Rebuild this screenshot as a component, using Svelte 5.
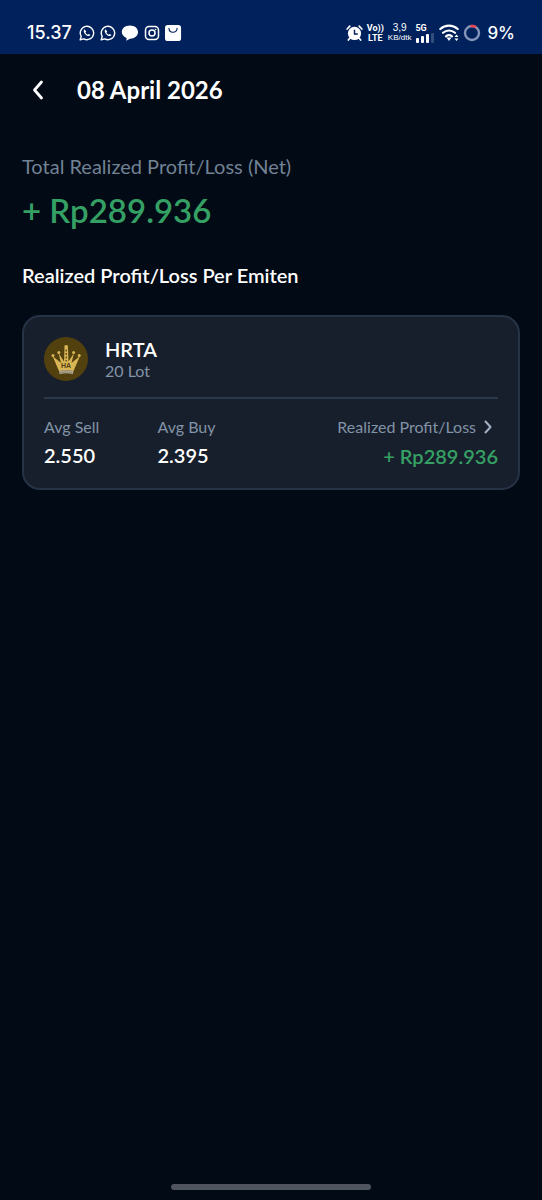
<script>
	let date = "08 April 2026";
	let total = "+ Rp289.936";

	let items = [
		{ code: "HRTA", lot: "20 Lot", sell: "2.550", buy: "2.395", profit: "+ Rp289.936" }
	];
</script>

<div class="screen">
	<div class="status">
		<div class="status-left">
			<span class="clock">15.37</span>
			{#each [1, 2] as n (n)}
				<svg width="16" height="16" viewBox="0 0 16 16" fill="none" stroke="#fff">
					<path d="M1.2 14.8l1-3.4a6.7 6.7 0 1 1 2.6 2.5z" stroke-width="1.4" stroke-linejoin="round" />
					<path d="M5.5 4.2c-1.6 1.5-.6 3.6 1 5.2 1.7 1.6 3.7 2.5 5 .7l-1.8-1.2-1 .8C7.6 9.2 6.8 8.4 6.4 7.4l.8-.9z" fill="#fff" stroke="none" />
				</svg>
			{/each}
			<svg width="18" height="16" viewBox="0 0 18 16" fill="#fff">
				<path d="M9 .5c4.6 0 8 2.8 8 6.600s-3.400 6.700-8 6.700l-3.800 2 .5-2.700C2.800 12 .8 9.800.8 7.100.8 3.300 4.400.5 9 .5z" />
			</svg>
			<svg width="16" height="16" viewBox="0 0 16 16" fill="none" stroke="#fff" stroke-width="1.5">
				<rect x="1.5" y="1.5" width="13" height="13" rx="3.5" />
				<circle cx="8" cy="8" r="3" />
				<circle cx="11.6" cy="4.4" r=".5" fill="#fff" stroke-width=".6" />
			</svg>
			<svg width="17" height="17" viewBox="0 0 18 18">
				<rect x="0" y="0" width="17" height="17" rx="3" fill="#fff" />
				<path d="M4.200 3.500c0 5.600 8.600 5.600 8.600 0" fill="none" stroke="#00215c" stroke-width="1.200" stroke-linecap="round" />
			</svg>
		</div>
		<div class="status-right">
			<svg width="17" height="18" viewBox="0 0 18 18">
				<circle cx="9" cy="9.5" r="7" fill="#fff" />
				<path d="M1.2 4.8l2.8-3M16.8 4.8l-2.8-3M4 14.5l-1.5 2M14 14.5l1.500 2" stroke="#fff" stroke-width="1.8" stroke-linecap="round" />
				<path d="M9 5.5v4.500h3.500" fill="none" stroke="#00215c" stroke-width="1.5" />
			</svg>
			<span class="stack volte"><b>Vo))</b><b>LTE</b></span>
			<span class="stack speed"><span class="rate">3,9</span><span>KB/dtk</span></span>
			<span class="stack signal">
				<b>5G</b>
				<svg width="19" height="10" viewBox="0 0 19 10" fill="#fff">
					<rect x="1" y="5" width="3" height="5" rx="1" />
					<rect x="6" y="3" width="3" height="7" rx="1" />
					<rect x="11" y="1" width="3" height="9" rx="1" />
					<rect x="16" y="0" width="3" height="10" rx="1" opacity=".2" />
				</svg>
			</span>
			<svg width="20" height="18" viewBox="0 0 20 18" fill="none" stroke="#fff" stroke-width="2.2" stroke-linecap="round">
				<path d="M1.3 5c5-4.400 12.400-4.400 17.400 0M4 8.800c3.500-3.100 8.500-3.100 12 0M7 12.300c1.800-1.400 4.200-1.400 6 0" />
				<path d="M7.5 13.500h5L10 17z" fill="#fff" stroke="none" />
				<path d="M15.5 13l2-2.500 2 2.500zM15.500 14.500l2 2.500 2-2.500z" fill="#fff" stroke="none" />
			</svg>
			<svg width="18" height="18" viewBox="0 0 18 18" fill="none" stroke-width="2.4">
				<circle cx="9" cy="9" r="7" stroke="#8394b8" />
				<path d="M7.5 2.2a7 7 0 0 1 5.5 1" stroke="#f04452" />
			</svg>
			<span class="percent">9%</span>
		</div>
	</div>

	<header>
		<button class="back" aria-label="Kembali">
			<svg width="12" height="20" viewBox="0 0 12 20" fill="none" stroke="#fff" stroke-width="2.8" stroke-linecap="round" stroke-linejoin="round">
				<path d="M9.5 2L2.5 10l7 8" />
			</svg>
		</button>
		<h1>{date}</h1>
	</header>

	<main>
		<p class="label">Total Realized Profit/Loss (Net)</p>
		<p class="total">{total}</p>
		<h2>Realized Profit/Loss Per Emiten</h2>

		{#each items as item (item.code)}
			<section class="card">
				<div class="emiten">
					<svg width="44" height="44" viewBox="0 0 44 44">
						<circle cx="22" cy="22" r="22" fill="#53400f" />
						<g fill="#d8b555">
							<path d="M15 34L8.500 19l8.500 7L14.500 16l5.500 8.500L20.500 11h3.500l.5 13.500L30 16l-2.500 10 8.500-7-6.500 15q-7-1.500-14.500 0z" />
							<circle cx="9" cy="18.500" r="1.500" />
							<circle cx="14.800" cy="15.500" r="1.500" />
							<circle cx="22.200" cy="9.800" r="1.900" />
							<circle cx="29.600" cy="15.500" r="1.500" />
							<circle cx="35.200" cy="18.500" r="1.500" />
						</g>
						<path d="M22.200 12.500v12" stroke="#53400f" stroke-width="1.200" stroke-dasharray="2 1.500" />
						<path d="M15 34q7-1.500 14.500 0l-.6 3q-6.500-1.500-13.300 0z" fill="#b4aa98" />
						<path d="M16 35.600q6-1.300 12.300 0" fill="none" stroke="#6f675b" stroke-width=".8" stroke-dasharray="1.500 .7" />
						<text x="22" y="31" text-anchor="middle">HA</text>
					</svg>
					<div>
						<h3>{item.code}</h3>
						<p class="lot">{item.lot}</p>
					</div>
				</div>
				<div class="figures">
					<dl>
						<dt>Avg Sell</dt>
						<dd>{item.sell}</dd>
					</dl>
					<dl>
						<dt>Avg Buy</dt>
						<dd>{item.buy}</dd>
					</dl>
					<div class="result">
						<button class="detail">
							Realized Profit/Loss
							<svg width="8" height="14" viewBox="0 0 8 14" fill="none" stroke="#a3b1c4" stroke-width="2" stroke-linejoin="round">
								<path d="M1 1l5.500 6L1 13" />
							</svg>
						</button>
						<span class="profit">{item.profit}</span>
					</div>
				</div>
			</section>
		{/each}
	</main>

	<div class="home"></div>
</div>

<style>
	:global(body) {
		background: #020a16;
	}
	.screen {
		display: flex;
		flex-direction: column;
		min-height: 100vh;
		background: #020a16;
		color: #fff;
		font-family: Lato, sans-serif;
	}
	h1, h2, h3, p, dl, dd {
		margin: 0;
	}
	svg {
		display: block;
		flex: none;
	}
	button {
		padding: 0;
		border: 0;
		background: none;
		color: inherit;
		font: inherit;
		cursor: pointer;
	}

	.status {
		display: flex;
		align-items: center;
		justify-content: space-between;
		padding: 12px 27px 0;
		height: 42px;
		background: #00215c;
	}
	.status-left,
	.status-right {
		display: flex;
		align-items: center;
	}
	.status-left {
		gap: 5px;
	}
	.status-right {
		gap: 4px;
	}
	.clock,
	.percent {
		font: 500 18px/20px Inter, sans-serif;
	}
	.clock {
		margin-right: 2px;
	}
	.percent {
		margin-left: 2px;
		font-size: 17px;
	}
	.stack {
		display: flex;
		flex-direction: column;
		align-items: center;
		font: 400 8px/10px "Liberation Sans", sans-serif;
	}
	.volte,
	.signal {
		font-family: Roboto, sans-serif;
		font-size: 9px;
	}
	.speed .rate {
		font-size: 10px;
	}
	.signal {
		align-items: flex-start;
		margin-right: 1px;
	}

	header {
		display: flex;
		align-items: center;
		gap: 23px;
		height: 72px;
		padding: 0 22px;
	}
	.back {
		display: flex;
		justify-content: center;
		padding: 6px 10px;
	}
	h1 {
		font-size: 24px;
		line-height: 30px;
		font-weight: 700;
	}

	main {
		flex: 1;
		padding: 28px 22px;
	}
	.label {
		font-size: 20px;
		line-height: 24px;
		color: #718294;
	}
	.total {
		margin-top: 10px;
		font-size: 33px;
		line-height: 44px;
		font-weight: 600;
		color: #35a064;
	}
	h2 {
		margin: 31px 0 28px;
		font-size: 20px;
		line-height: 24px;
		font-weight: 600;
	}

	.card {
		padding: 20px;
		border: 2px solid #263345;
		border-radius: 18px;
		background: #181f2c;
	}
	.emiten {
		display: flex;
		align-items: center;
		gap: 17px;
		padding-bottom: 16px;
		border-bottom: 2px solid #2a384a;
	}
	.emiten text {
		font: 700 7px "Liberation Sans", sans-serif;
		fill: #53400f;
	}
	h3 {
		font-size: 20px;
		line-height: 24px;
		font-weight: 600;
	}
	.lot {
		font-size: 16px;
		line-height: 20px;
		color: #8193a6;
	}
	.figures {
		display: grid;
		grid-template-columns: 1fr 1fr 2fr;
		padding-top: 16px;
	}
	dt,
	.detail {
		font-size: 16px;
		line-height: 24px;
		color: #8193a6;
	}
	dd {
		margin-top: 4px;
		font-size: 20px;
		line-height: 24px;
		font-weight: 600;
	}
	.result {
		display: flex;
		flex-direction: column;
		align-items: flex-end;
	}
	.detail {
		display: flex;
		align-items: center;
		gap: 8px;
		margin-right: 6px;
	}
	.profit {
		margin-top: 5px;
		font-size: 20px;
		line-height: 24px;
		font-weight: 600;
		color: #35a064;
	}

	.home {
		align-self: center;
		width: 37%;
		height: 6px;
		margin-bottom: 10px;
		border-radius: 3px;
		background: #50545e;
	}
</style>
